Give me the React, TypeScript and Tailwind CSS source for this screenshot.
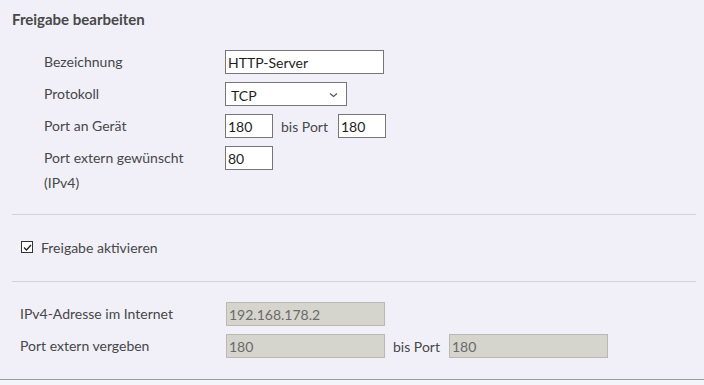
import React from "react";

const Label = ({ children }: { children: React.ReactNode }) => (
    <div className="w-[181px] text-[14px] leading-6 text-[#474747]">{children}</div>
);

const Field = ({ value, w }: { value: string; w: string }) => (
    <input
        readOnly
        value={value}
        className={`${w} h-6 border border-[#767676] bg-white px-[2px] text-[14px] text-[#1e1e1e] outline-none`}
    />
);

const Disabled = ({ value }: { value: string }) => (
    <input
        readOnly
        disabled
        value={value}
        className="w-[159px] h-6 border border-[#b9b9b3] bg-[#d5d5cd] px-[2px] text-[14px] text-[#6a6a6a] outline-none"
    />
);

const App = () => {
    return (
        <div
            className="w-[704px] h-[385px] bg-[#f1f0f9] overflow-hidden"
            style={{ fontFamily: "Lato, 'Noto Sans', sans-serif" }}
        >
            {/* Titel */}
            <div className="pt-[9px] pl-3 h-[29px] text-[15px] leading-5 font-bold text-[#484848]">
                Freigabe bearbeiten
            </div>

            {/* Formular */}
            <div className="mt-[21px] pl-[44px] flex flex-col gap-2">
                <div className="flex items-center">
                    <Label>Bezeichnung</Label>
                    <Field value="HTTP-Server" w="w-[159px]" />
                </div>
                <div className="flex items-center">
                    <Label>Protokoll</Label>
                    <div className="relative w-[122px] h-6 border border-[#767676] bg-white">
                        <select className="appearance-none w-full h-full bg-transparent pl-[5px] text-[14px] text-[#1e1e1e] outline-none">
                            <option>TCP</option>
                        </select>
                        <svg
                            className="absolute right-[8px] top-[9px] pointer-events-none"
                            width="9"
                            height="6"
                            viewBox="0 0 9 6"
                        >
                            <path d="M1 1.5 L4.5 4.5 L8 1.5" fill="none" stroke="#555" strokeWidth="1.2" />
                        </svg>
                    </div>
                </div>
                <div className="flex items-center">
                    <Label>Port an Gerät</Label>
                    <Field value="180" w="w-[48px]" />
                    <span className="ml-2 w-[57px] text-[14px] text-[#474747]">bis Port</span>
                    <Field value="180" w="w-[48px]" />
                </div>
                <div className="flex items-start">
                    <div className="w-[181px] text-[14px] leading-[25px] -mt-px text-[#474747]">
                        Port extern gewünscht
                        <br />
                        (IPv4)
                    </div>
                    <Field value="80" w="w-[48px]" />
                </div>
            </div>

            <div className="mt-[19px] ml-3 mr-2 h-px bg-[#d3d3d6]" />

            {/* Aktivieren */}
            <div className="mt-5 pl-[21px] h-6 flex items-center gap-2">
                <div className="w-[12px] h-[12px] border border-[#333] bg-white flex items-center justify-center">
                    <svg width="9" height="7" viewBox="0 0 9 7">
                        <path d="M1 3.5 L3.5 6 L8 1" fill="none" stroke="#222" strokeWidth="1.3" />
                    </svg>
                </div>
                <span className="text-[14px] text-[#474747]">Freigabe aktivieren</span>
            </div>

            <div className="mt-[22px] ml-3 mr-2 h-px bg-[#d3d3d6]" />

            {/* Ergebnis */}
            <div className="mt-5 pl-5 flex flex-col gap-2">
                <div className="flex items-center">
                    <div className="w-[206px] text-[14px] leading-6 text-[#474747]">IPv4-Adresse im Internet</div>
                    <Disabled value="192.168.178.2" />
                </div>
                <div className="flex items-center">
                    <div className="w-[206px] text-[14px] leading-6 text-[#474747]">Port extern vergeben</div>
                    <Disabled value="180" />
                    <span className="ml-2 w-[56px] text-[14px] text-[#474747]">bis Port</span>
                    <Disabled value="180" />
                </div>
            </div>

            <div className="mt-[21px] h-px bg-[#8fa0a0]" />
            <div className="h-[10px] bg-[#f4f4f9]" />
        </div>
    );
};

export default App;
